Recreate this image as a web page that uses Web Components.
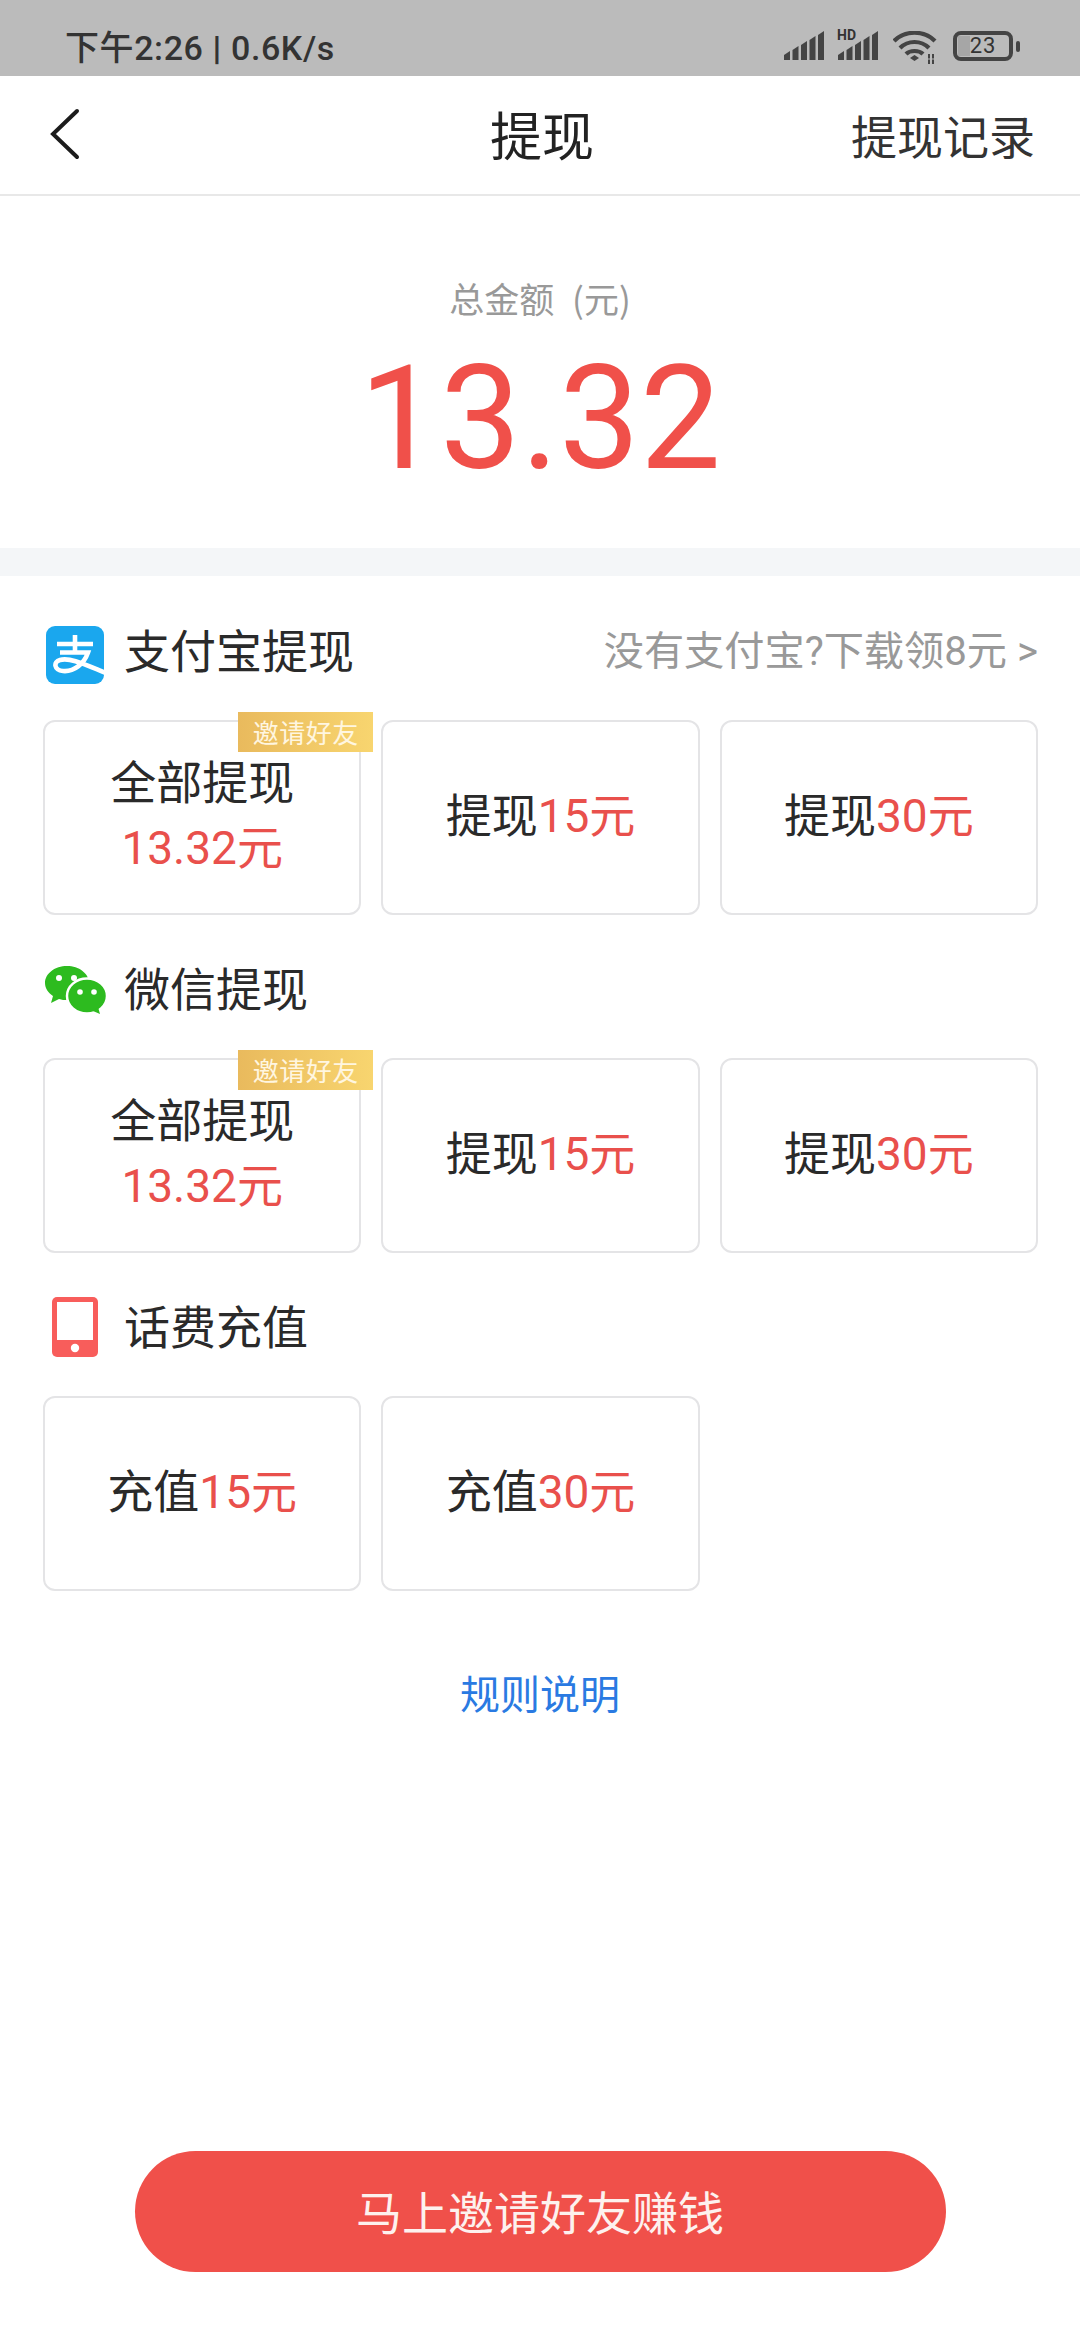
<!DOCTYPE html>
<html lang="zh-CN">
<head>
<meta charset="utf-8">
<title>提现</title>
<style>
  html, body { margin: 0; background: #fff; }
  body { font-family: Roboto, "Noto Sans CJK SC", sans-serif; color: #222; }
</style>
</head>
<body>
<withdraw-page>
  <status-bar></status-bar>
  <nav-bar title="提现" action="提现记录"></nav-bar>
  <amount-head label="总金额 (元)" value="13.32"></amount-head>

  <pay-section title="支付宝提现" extra="没有支付宝?下载领8元 &gt;">
    <svg slot="icon" width="60" height="60" viewBox="0 0 60 60" style="margin-left:3px">
      <clipPath id="ali"><rect x="0" y="2" width="58" height="58" rx="9"/></clipPath>
      <rect x="0" y="2" width="58" height="58" rx="9" fill="#1aa7ee"/>
      <path clip-path="url(#ali)" d="M11 20H47M29 11V28M14 28.500H42C38 40 28 48 17 47C8 46 7 38 14 36C24 33 40 41 60 49" fill="none" stroke="#fff" stroke-width="4.600"/>
    </svg>
    <pay-card label="全部提现" amount="13.32元" badge="邀请好友"></pay-card>
    <pay-card prefix="提现" amount="15元"></pay-card>
    <pay-card prefix="提现" amount="30元"></pay-card>
  </pay-section>

  <pay-section title="微信提现">
    <svg slot="icon" width="64" height="54" viewBox="0 0 64 54">
      <path d="M24 1C12 1 2 8.500 2 18C2 23.500 5.500 28 10 31L8 38L16 34C19 35 21 35 24 35C36 35 46 27 46 18C46 8.500 36 1 24 1Z" fill="#2dbb1f"/>
      <ellipse cx="44" cy="31" rx="20" ry="17.500" fill="#2dbb1f" stroke="#fff" stroke-width="2.500"/>
      <path d="M50 46L57 49L55 42Z" fill="#2dbb1f"/>
      <circle cx="16" cy="13" r="3" fill="#fff"/>
      <circle cx="31" cy="13" r="3" fill="#fff"/>
      <circle cx="37" cy="27" r="2.800" fill="#fff"/>
      <circle cx="51" cy="27" r="2.800" fill="#fff"/>
    </svg>
    <pay-card label="全部提现" amount="13.32元" badge="邀请好友"></pay-card>
    <pay-card prefix="提现" amount="15元"></pay-card>
    <pay-card prefix="提现" amount="30元"></pay-card>
  </pay-section>

  <pay-section title="话费充值">
    <svg slot="icon" width="60" height="60" viewBox="0 0 60 60" style="margin-top:-6px">
      <rect x="9" y="0" width="46" height="60" rx="5" fill="#f85d5b"/>
      <rect x="14" y="5" width="36" height="38" fill="#fff"/>
      <circle cx="32" cy="51" r="4.200" fill="#fff"/>
    </svg>
    <pay-card prefix="充值" amount="15元"></pay-card>
    <pay-card prefix="充值" amount="30元"></pay-card>
  </pay-section>

  <rule-link>规则说明</rule-link>
  <invite-button>马上邀请好友赚钱</invite-button>
</withdraw-page>

<script>
const SIGNAL_BARS = `
  <path d="M0 29V24L6 20V29Z"/>
  <path d="M8.500 29V19L14.500 15V29Z"/>
  <path d="M17 29V14L23 10V29Z"/>
  <path d="M25.500 29V9L31.500 5V29Z"/>
  <path d="M34 29V4L40 0V29Z"/>`;

class WithdrawPage extends HTMLElement {
  constructor() {
    super();
    this.attachShadow({ mode: "open" });
    this.shadowRoot.innerHTML = `
      <style>
        :host { display: flex; flex-direction: column; min-height: 2340px; background: #fff; }
      </style>
      <slot></slot>
    `;
  }
}

class StatusBar extends HTMLElement {
  constructor() {
    super();
    this.attachShadow({ mode: "open" });
    this.shadowRoot.innerHTML = `
      <style>
        :host { display: flex; align-items: center; height: 76px; background: #bbb; padding: 12px 60px 0 65px; box-sizing: border-box; color: #333; }
        .time { font: 500 34px Roboto, "Noto Sans CJK SC", sans-serif; letter-spacing: 0.600px; flex: 1; margin-top: 2px; }
        .time b { font-weight: 900; }
        .icons { display: flex; align-items: flex-start; height: 33px; margin-top: 6px; }
        .hd { position: relative; width: 40px; height: 29px; margin-left: 14px; }
        .hd b { position: absolute; left: -1px; top: -4px; font: 700 14px Roboto, sans-serif; color: #333; background: #bbb; padding-right: 1px; }
        .hd svg { position: absolute; left: 0; top: 0; }
        .wifi { margin-left: 15px; }
        .batt { position: relative; width: 60px; height: 30px; margin-left: 16px; box-sizing: border-box; border: 4px solid #444; border-radius: 8px; display: flex; align-items: center; justify-content: center; font: 400 22px Roboto, sans-serif; color: #333; letter-spacing: 1px; }
        .batt i { position: absolute; left: 1px; top: 1px; bottom: 1px; width: 12px; background: #a6a6a6; }
        .batt span { position: relative; }
        .nub { width: 4px; height: 11px; background: #444; border-radius: 2px; margin: 10px 0 0 3px; }
      </style>
      <div class="time">下午2:26 <b>|</b> 0.6K/s</div>
      <div class="icons">
        <svg width="40" height="29" viewBox="0 0 40 29" fill="#444">${SIGNAL_BARS}</svg>
        <div class="hd">
          <svg width="40" height="29" viewBox="0 0 40 29" fill="#444">${SIGNAL_BARS}</svg>
          <b>HD</b>
        </div>
        <svg class="wifi" width="44" height="33" viewBox="0 0 44 33">
          <g fill="none" stroke="#444" stroke-width="4.200">
            <path d="M1 10C12 -1 31 -1 42 10"/>
            <path d="M7 17C15 9 28 9 36 17"/>
            <path d="M13 23C17 19 26 19 30 23"/>
          </g>
          <path d="M17 27L21.500 24L26 27L21.500 30Z" fill="#444"/>
          <path d="M36 23V33M40 23V33" stroke="#444" stroke-width="2"/>
          <path d="M33 28H43" stroke="#bbb" stroke-width="1"/>
        </svg>
        <div class="batt"><i></i><span>23</span></div>
        <div class="nub"></div>
      </div>
    `;
  }
}

class NavBar extends HTMLElement {
  constructor() {
    super();
    this.attachShadow({ mode: "open" });
    this.shadowRoot.innerHTML = `
      <style>
        :host { display: grid; grid-template-columns: 1fr auto 1fr; align-items: center; height: 120px; box-sizing: border-box; border-bottom: 2px solid #e8e8e8; padding: 0 45px 0 49px; background: #fff; }
        svg { display: block; margin-top: -2px; }
        h1 { margin: -3px 0 0; font: 400 52px "Noto Sans CJK SC", sans-serif; color: #222; }
        a { justify-self: end; margin-top: -3px; font: 400 46px "Noto Sans CJK SC", sans-serif; color: #333; }
      </style>
      <svg width="32" height="52" viewBox="0 0 32 52">
        <path d="M28 3L4 26L28 49" fill="none" stroke="#1c1c1c" stroke-width="4" stroke-linecap="round"/>
      </svg>
      <h1>${this.getAttribute("title")}</h1>
      <a>${this.getAttribute("action")}</a>
    `;
  }
}

class AmountHead extends HTMLElement {
  constructor() {
    super();
    this.attachShadow({ mode: "open" });
    this.shadowRoot.innerHTML = `
      <style>
        :host { display: flex; flex-direction: column; align-items: center; height: 380px; margin-bottom: 1px; box-sizing: border-box; border-bottom: 28px solid #f4f6f8; padding-top: 78px; }
        .label { font: 400 35px/48px "Noto Sans CJK SC", sans-serif; color: #999; word-spacing: 10px; }
        .value { font: 400 144px/170px Roboto, sans-serif; color: #f0504a; margin-top: 12px; }
      </style>
      <div class="label">${this.getAttribute("label")}</div>
      <div class="value">${this.getAttribute("value")}</div>
    `;
  }
}

class PaySection extends HTMLElement {
  constructor() {
    super();
    this.attachShadow({ mode: "open" });
    const extra = this.getAttribute("extra");
    this.shadowRoot.innerHTML = `
      <style>
        :host { display: block; padding: 47px 42px 0 43px; }
        .head { display: flex; align-items: center; height: 60px; margin-bottom: 36px; }
        .icon { width: 81px; height: 60px; display: flex; align-items: center; flex: none; }
        .title { flex: 1; font: 400 46px "Noto Sans CJK SC", sans-serif; color: #2a2a2a; margin-top: -12px; }
        .extra { font: 400 40.200px Roboto, "Noto Sans CJK SC", sans-serif; color: #999; margin-top: -14px; }
        .grid { display: grid; grid-template-columns: repeat(3, 1fr); gap: 20px; }
      </style>
      <div class="head">
        <div class="icon"><slot name="icon"></slot></div>
        <div class="title">${this.getAttribute("title")}</div>
        ${extra ? `<div class="extra">${extra.replace(/>/g, "&gt;")}</div>` : ""}
      </div>
      <div class="grid"><slot></slot></div>
    `;
  }
}

class PayCard extends HTMLElement {
  constructor() {
    super();
    this.attachShadow({ mode: "open" });
    const label = this.getAttribute("label");
    const prefix = this.getAttribute("prefix") || "";
    const amount = this.getAttribute("amount");
    const badge = this.getAttribute("badge");
    this.shadowRoot.innerHTML = `
      <style>
        :host { display: flex; flex-direction: column; align-items: center; justify-content: center; position: relative; height: 195px; box-sizing: border-box; border: 2px solid #e4e4e6; border-radius: 12px; font: 400 46px/65px Roboto, "Noto Sans CJK SC", sans-serif; color: #2a2a2a; padding-bottom: 3px; }
        .red { color: #e9504c; }
        .badge { position: absolute; top: -10px; right: -14px; width: 135px; height: 40px; background: linear-gradient(90deg, #e9ba5d, #f8d56f); color: #fff6e0; font: 400 26px/40px "Noto Sans CJK SC", sans-serif; text-align: center; letter-spacing: 0.500px; }
      </style>
      ${badge ? `<div class="badge">${badge}</div>` : ""}
      ${label ? `<div>${label}</div><div class="red">${amount}</div>` : `<div>${prefix}<span class="red">${amount}</span></div>`}
    `;
  }
}

class RuleLink extends HTMLElement {
  constructor() {
    super();
    this.attachShadow({ mode: "open" });
    this.shadowRoot.innerHTML = `
      <style>
        :host { display: block; text-align: center; margin-top: 73px; font: 400 40px/56px "Noto Sans CJK SC", sans-serif; color: #2a7ae2; }
      </style>
      <slot></slot>
    `;
  }
}

class InviteButton extends HTMLElement {
  constructor() {
    super();
    this.attachShadow({ mode: "open" });
    this.shadowRoot.innerHTML = `
      <style>
        :host { display: flex; align-items: center; justify-content: center; align-self: center; width: 811px; height: 121px; margin: auto 0 68px; border-radius: 61px; background: #f0504a; color: #fdf1ee; font: 400 46px "Noto Sans CJK SC", sans-serif; padding-bottom: 3px; box-sizing: border-box; }
      </style>
      <slot></slot>
    `;
  }
}

customElements.define("withdraw-page", WithdrawPage);
customElements.define("status-bar", StatusBar);
customElements.define("nav-bar", NavBar);
customElements.define("amount-head", AmountHead);
customElements.define("pay-section", PaySection);
customElements.define("pay-card", PayCard);
customElements.define("rule-link", RuleLink);
customElements.define("invite-button", InviteButton);
</script>
</body>
</html>
